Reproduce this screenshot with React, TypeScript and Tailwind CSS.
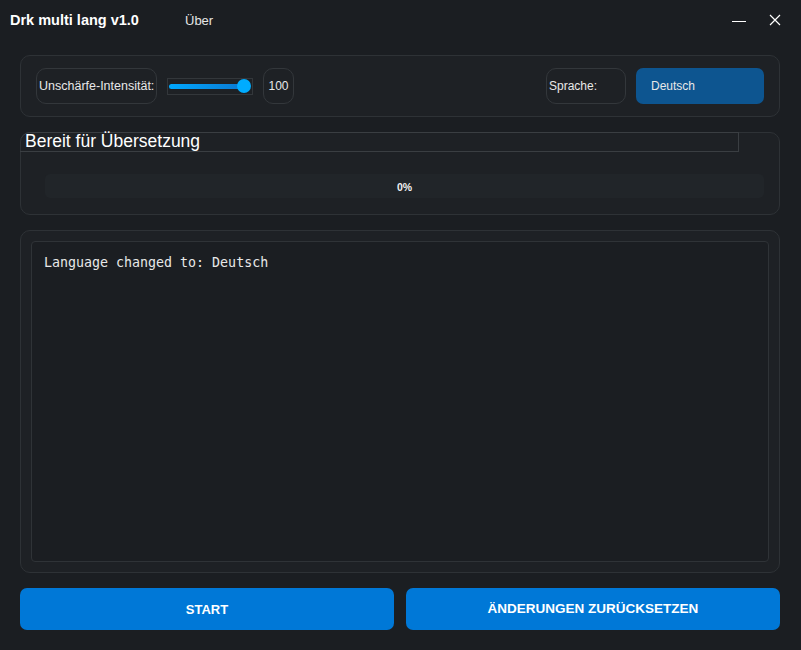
export default function App() {
  const font = { fontFamily: '"Liberation Sans", Arial, sans-serif' };
  return (
    <div className="w-[801px] h-[650px] bg-[#1b1e22] text-white flex flex-col" style={font}>
      {/* title bar */}
      <div className="h-[40px] flex items-center shrink-0 pt-[1px]">
        <div className="pl-[10px] text-[14.5px] font-bold w-[185px]">Drk multi lang v1.0</div>
        <div className="text-[13px] text-[#e6e6e6]">Über</div>
        <div className="ml-auto flex items-center pr-[8px]">
          <div className="w-[36px] h-[40px] flex items-center justify-center">
            <div className="w-[14px] h-px bg-white mt-[2px]" />
          </div>
          <div className="w-[36px] h-[40px] flex items-center justify-center">
            <svg width="12" height="12" viewBox="0 0 12 12" className="-mt-[1px]">
              <path d="M1 1L11 11M11 1L1 11" stroke="white" strokeWidth="1.2" />
            </svg>
          </div>
        </div>
      </div>

      <div className="flex flex-col pl-[20px] pr-[21px] pt-[15px]">
        {/* settings frame */}
        <div className="h-[62px] rounded-[10px] border border-[#2e3236] bg-[#1e2125] flex items-center px-[15px]">
          <div className="h-[36px] w-[121px] px-[2px] rounded-[10px] border border-[#33373b] flex items-center text-[12.5px] text-[#e8e8e8] whitespace-nowrap">
            Unschärfe-Intensität:
          </div>
          <div className="ml-[10px] w-[86px] h-[17px] border border-[#33373b] relative flex items-center">
            <div className="ml-[1px] w-[76px] h-[5px] rounded-full bg-gradient-to-r from-[#00a8ff] to-[#0a78d0]" />
            <div className="absolute right-[1px] w-[14px] h-[14px] rounded-full bg-[#00acff]" />
          </div>
          <div className="ml-[10px] h-[36px] w-[31px] rounded-[10px] border border-[#33373b] flex items-center justify-center text-[12px] text-[#e8e8e8]">
            100
          </div>
          <div className="ml-auto h-[36px] w-[80px] px-[2px] rounded-[10px] border border-[#33373b] flex items-center text-[12px] text-[#e8e8e8]">
            Sprache:
          </div>
          <div className="ml-[10px] h-[36px] w-[128px] rounded-[7px] bg-[#0d5590] flex items-center pl-[15px] text-[12px] text-[#e8e8e8]">
            Deutsch
          </div>
        </div>

        {/* progress frame */}
        <div className="mt-[15px] h-[83px] rounded-[10px] border border-[#2e3236] bg-[#1e2125] flex flex-col">
          <div className="-mt-px -ml-px w-[719px] h-[20px] border border-[#3a3e42] rounded-tl-[10px] border-l-0 flex items-center pl-[5px] text-[17.5px] leading-none">
            Bereit für Übersetzung
          </div>
          <div className="mt-[22px] ml-[24px] w-[719px] h-[24px] pt-[4px] rounded-[5px] bg-[#212529] flex items-center justify-center text-[10.5px] font-bold text-[#f0f0f0]">
            0%
          </div>
        </div>

        {/* log frame */}
        <div className="mt-[15px] h-[343px] rounded-[10px] border border-[#2e3236] bg-[#1e2125] p-[10px]">
          <div className="h-full rounded-[4px] border border-[#2f3337] bg-[#1b1e22] px-[12px] pt-[11px]">
            <div className="text-[13.3px] text-[#e8e8e8]" style={{ fontFamily: '"DejaVu Sans Mono", monospace' }}>
              Language changed to: Deutsch
            </div>
          </div>
        </div>

        {/* buttons */}
        <div className="mt-[15px] flex gap-[12px]">
          <button className="flex-1 h-[42px] pt-[1px] rounded-[7px] bg-[#0078d7] text-[13px] font-bold text-white">
            START
          </button>
          <button className="flex-1 h-[42px] pt-[1px] rounded-[7px] bg-[#0078d7] text-[13.5px] font-bold text-white">
            ÄNDERUNGEN ZURÜCKSETZEN
          </button>
        </div>
      </div>
    </div>
  );
}
